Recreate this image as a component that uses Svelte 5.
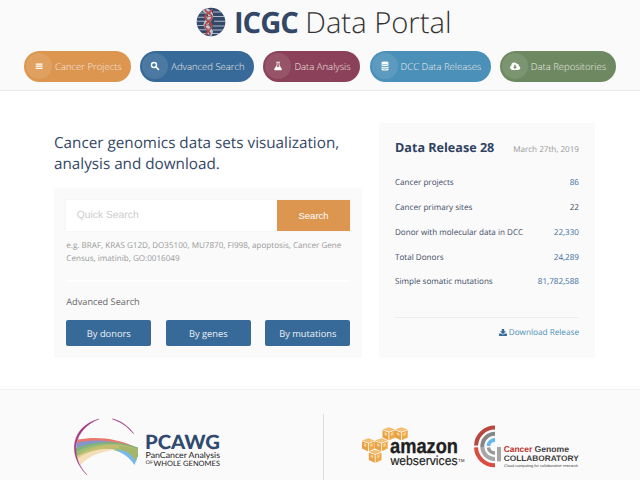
<script>
  const nav = [
    { label: 'Cancer Projects', icon: 'list', bg: '#dc964f', w: 107 },
    { label: 'Advanced Search', icon: 'search', bg: '#376a98', w: 114 },
    { label: 'Data Analysis', icon: 'flask', bg: '#8b4159', w: 97 },
    { label: 'DCC Data Releases', icon: 'db', bg: '#4a90b8', w: 121 },
    { label: 'Data Repositories', icon: 'cloud', bg: '#6e8961', w: 116 }
  ];
  const stats = [
    ['Cancer projects', '86', true],
    ['Cancer primary sites', '22', false],
    ['Donor with molecular data in DCC', '22,330', true],
    ['Total Donors', '24,289', true],
    ['Simple somatic mutations', '81,782,588', true]
  ];
  const cubes = [[20.5, 0], [33, 0], [0, 11], [13, 11], [6.8, 22.4]];
</script>

<header>
  <div class="brand">
    <svg width="30" height="30" viewBox="0 0 30 30">
      <defs><clipPath id="globe"><circle cx="15" cy="15" r="14.3" /></clipPath></defs>
      <g clip-path="url(#globe)">
        <rect width="30" height="30" fill="#344766" />
        <path d="M0 6h12M17 5h13M0 10.3h11M17 9.5h13M0 14.2h10M18 14.2h12M0 18.5h12M17 19h13M0 22.8h10M17 23h13M5 26.5h20" stroke="#a9b9ce" stroke-width="1.1" />
        <path d="M8 2c5 3 8 5 6 9s-6 5-3 9 5 4 2 8" stroke="#bfc8d7" stroke-width="5" fill="none" />
        <path d="M9 2c0 4 7 4 7 8s-7 5-7 9 6 5 5 9M16 2c0 4-7 4-7 8s7 5 7 9-6 5-6 9" stroke="#ad4a47" stroke-width="1.6" fill="none" />
        <path d="M10 5h5M10 9.5h5M10 13h5M10 18h5M10 22h5" stroke="#b85b58" stroke-width=".9" />
      </g>
    </svg>
    <h1><b>ICGC</b><span>Data Portal</span></h1>
  </div>
  <nav>
    {#each nav as n}
      <a style="background:{n.bg};width:{n.w}px">
        <i>
          <svg width="12" height="12" viewBox="0 0 12 12" fill="#fff">
            {#if n.icon === 'list'}
              <path d="M2.7 3.5h6.8v1.2H2.7zM2.7 5.6h6.8v1.2H2.7zM2.7 7.7h6.8v1.2H2.7z" />
            {:else if n.icon === 'search'}
              <circle cx="5" cy="5" r="2.5" fill="none" stroke="#fff" stroke-width="1.4" />
              <path d="M6.9 6.9l2.5 2.5" stroke="#fff" stroke-width="1.7" stroke-linecap="round" />
            {:else if n.icon === 'flask'}
              <path d="M4.2 1.7h3.7v.9h-.5v2.5l2.4 4c.4.7 0 1.2-.7 1.2H3c-.8 0-1-.6-.7-1.2l2.400-4V2.600h-.5z" />
              <path d="M5.500 2.600h1.100v2.700l.8 1.500H4.700l.8-1.500z" fill="#8b4159" />
            {:else if n.icon === 'db'}
              <ellipse cx="6" cy="3" rx="3.600" ry="1.400" />
              <path d="M2.400 4.100q3.600 1.700 7.200 0v1q-.3 1.200-3.600 1.200t-3.600-1.200zM2.400 6.400q3.600 1.700 7.200 0v1q-.3 1.200-3.600 1.200t-3.600-1.200zM2.400 8.600q3.600 1.700 7.200 0v.8q-.3 1.200-3.600 1.200t-3.600-1.200z" />
            {:else}
              <path d="M3.200 10a2.400 2.400 0 0 1-.9-4.500 3 3 0 0 1 5.500-1.700 1.800 1.800 0 0 1 2 2.100 2.100 2.100 0 0 1-.3 4.100z" />
              <path d="M5.300 4.800h1.300v2H8l-2.050 2.200L3.900 6.800h1.400z" fill="#6e8961" />
            {/if}
          </svg>
        </i>
        <span>{n.label}</span>
      </a>
    {/each}
  </nav>
</header>

<main>
  <section class="left">
    <h2>Cancer genomics data sets visualization,<br />analysis and download.</h2>
    <div class="panel">
      <div class="search">
        <div class="field">Quick Search</div>
        <button>Search</button>
      </div>
      <p>e.g. BRAF, KRAS G12D, DO35100, MU7870, FI998, apoptosis, Cancer Gene<br />Census, imatinib, GO:0016049</p>
      <div class="rule"></div>
      <h3>Advanced Search</h3>
      <div class="by">
        <a>By donors</a><a>By genes</a><a>By mutations</a>
      </div>
    </div>
  </section>
  <section class="release">
    <div class="head"><h4>Data Release 28</h4><time>March 27th, 2019</time></div>
    {#each stats as [k, v, link]}
      <div class="row"><span>{k}</span><span class:link>{v}</span></div>
    {/each}
    <div class="dl">
      <svg width="8" height="7" viewBox="0 0 9 8" fill="#376a98">
        <path d="M3.100 0h2.800v2.600h2L4.500 5.900 1.100 2.600h2zM0 5.200h2.400l2.100 1.300 2.100-1.300H9V8H0z" />
      </svg>
      <span>Download Release</span>
    </div>
  </section>
</main>

<footer>
  <svg class="pcawg" width="150" height="60" viewBox="72 415 150 60">
    <path d="M77.500 439.500C97 436 117 438 138 448L137.500 457C117 443 97 443 76.500 449z" fill="#e8796f" />
    <path d="M77 443C97 438 117 441 138 450L137 459C117 445 96 446 76 453z" fill="#8495c9" />
    <path d="M76 448C97 440 118 440 138 447.500V457C116 444 95 447 76 456z" fill="#82b27c" />
    <path d="M76 452C98 440 119 443 138 451L136 462C116 445 97 447 76 457z" fill="#9fbc77" opacity=".9" />
    <path d="M76.500 456C96 443 117 441 138 449V453C118 444 97 449 77 460z" fill="#cfbf6d" opacity=".75" />
    <path d="M77.500 458.500C91 450 101 448 116 449.500C99 452 89 456 80.500 465z" fill="#f4dfb8" />
    <path d="M116 450C124 450 131 453 137 458L134.500 465C129 457 124 454 116 450z" fill="#76b9ef" />
    <path d="M119 446C126 446 133 448 138 450L136 461C131 454 126 451 119 448z" fill="#a5b66c" />
    <path d="M99 419C72 426 66 454 87 475C68.500 455 73.500 429 99 419z" fill="#a03a83" stroke="#a03a83" stroke-width=".4" />
    <path d="M112.500 419C121 421 128 426 133.500 433.500C127 426 121 421.800 112.500 419z" fill="#a03a83" stroke="#a03a83" stroke-width=".6" />
    <g font-family="Lato, sans-serif">
      <text x="145" y="448.500" font-size="19.500" font-weight="900" fill="#304a70" textLength="75" lengthAdjust="spacingAndGlyphs">PCAWG</text>
      <text x="145.500" y="457.700" font-size="8.400" fill="#222" textLength="74.500" lengthAdjust="spacingAndGlyphs">PanCancer Analysis</text>
      <text x="145.500" y="464" font-size="5" fill="#333" textLength="7.500" lengthAdjust="spacingAndGlyphs">OF</text>
      <text x="153.500" y="465.800" font-size="7.400" fill="#222" textLength="66.500" lengthAdjust="spacingAndGlyphs">WHOLE GENOMES</text>
    </g>
  </svg>
  <div class="divider"></div>
  <svg class="aws" width="106" height="46" viewBox="360 425 106 46">
    {#each cubes as [x, y]}
      <g transform="translate({362 + x} {427.300 + y}) scale(1.06)">
        <path d="M6 0l6 2-6 2.200L0 2z" fill="#f3bd6c" />
        <path d="M0 2.800l5.600 2v7.400L0 9.600z" fill="#e7a043" />
        <path d="M12 2.800l-5.600 2v7.400L12 9.600z" fill="#eda84a" />
        <path d="M2 4.800l2 .8v2.300l-2-.8zM10 4.800l-2 .8v2.300l2-.8zM4 2h4" fill="#f8d391" stroke="#f8d391" stroke-width=".35" />
      </g>
    {/each}
    <g font-family="Liberation Sans, sans-serif" fill="#202020">
      <text x="390" y="453" font-size="20.500" font-weight="700" stroke="#202020" stroke-width=".3" textLength="68" lengthAdjust="spacingAndGlyphs">amazon</text>
      <text x="390.500" y="465" font-size="13" stroke="#202020" stroke-width=".15" textLength="67" lengthAdjust="spacingAndGlyphs">webservices</text>
      <text x="458" y="461.500" font-size="4.500" textLength="6.500" lengthAdjust="spacingAndGlyphs">TM</text>
    </g>
  </svg>
  <svg class="collab" width="110" height="44" viewBox="472 425 110 44">
    <g fill="none">
      <path d="M495 427.600A18.800 18.800 0 0 0 476 445.500" stroke="#b8473f" stroke-width="4" />
      <path d="M476 447.400A18.800 18.800 0 0 0 495 465.300" stroke="#d94d43" stroke-width="4" />
      <path d="M495 433.700A12.700 12.700 0 0 0 482.300 447" stroke="#858585" stroke-width="4" />
      <path d="M482.300 447A12.700 12.700 0 0 0 495 459.200" stroke="#a6a6a6" stroke-width="4" />
      <path d="M495 440A6.500 6.500 0 0 0 488.400 446" stroke="#66b8ed" stroke-width="3.800" />
      <path d="M488.400 447.500A6.500 6.500 0 0 0 495 453" stroke="#999" stroke-width="3.500" />
      <path d="M499 447v14.300" stroke="#a5a5a5" stroke-width="4" />
    </g>
    <g font-family="Liberation Sans, sans-serif">
      <text x="503.700" y="452.300" font-size="8.500" font-weight="700" fill="#bd332e" textLength="28.500" lengthAdjust="spacingAndGlyphs">Cancer</text>
      <text x="534.500" y="452.300" font-size="8.500" font-weight="700" fill="#444" textLength="34.500" lengthAdjust="spacingAndGlyphs">Genome</text>
      <text x="503.700" y="460.500" font-size="8" font-weight="700" fill="#3c3c3c" textLength="75" lengthAdjust="spacingAndGlyphs">COLLABORATORY</text>
      <text x="504" y="467" font-size="3.900" fill="#444" textLength="74" lengthAdjust="spacingAndGlyphs">Cloud computing for collaborative research</text>
    </g>
  </svg>
</footer>

<style>
  :global(body) { margin: 0; background: #fff; overflow: hidden; }
  :global(#app) { height: 480px; overflow: hidden; font-family: "Open Sans", "Noto Sans", sans-serif; text-rendering: geometricPrecision; }
  h1, h2, h3, h4, p { margin: 0; font-weight: 400; }
  header { box-sizing: border-box; height: 91px; background: #fafafa; border-bottom: 1px solid #e9e9e9; }
  .brand { display: flex; height: 51px; padding-left: 196px; gap: 8px; }
  .brand svg { margin-top: 7px; }
  h1 { display: flex; gap: 7.500px; font-size: 29.200px; line-height: 44px; white-space: nowrap; color: #333; font-weight: 300; }
  h1 b { color: #344766; font-weight: 700; letter-spacing: -1.050px; }
  nav { display: flex; gap: 9.200px; padding-left: 24px; }
  nav a { display: flex; flex: none; box-sizing: border-box; height: 30.500px; border-radius: 16px; padding: 2px; align-items: center; gap: 3px; color: #f3ece8; font-size: 9.500px; font-weight: 300; white-space: nowrap; }
  nav i { display: flex; flex: none; width: 26px; height: 26px; border-radius: 50%; background: rgba(255,255,255,.1); align-items: center; justify-content: center; }
  main { display: flex; gap: 17px; height: 298px; padding-left: 54px; }
  .left { width: 308px; }
  h2 { padding-top: 42px; height: 55px; font-size: 15.250px; line-height: 20.600px; color: #344766; white-space: nowrap; }
  .panel { box-sizing: border-box; height: 170px; padding: 12px 12px 0 12.300px; background: #fafafa; }
  .search { display: flex; height: 31px; width: 284px; box-shadow: 0 0 2px #eee; font-family: "Liberation Sans", sans-serif; }
  .field { flex: 1; background: #fff; color: #ccc; font-size: 10.300px; line-height: 32px; padding-left: 10.500px; }
  button { width: 73.500px; border: 0; padding: 0; background: #dc964f; color: #fff; font: 9.500px "Liberation Sans", sans-serif; }
  p { margin-top: 9px; font-size: 8.100px; line-height: 12.600px; color: #999; white-space: nowrap; }
  .rule { height: 1px; background: #fff; margin-top: 15px; border-bottom: 1px solid #fdfdfd; }
  h3 { font-size: 9.200px; line-height: 14px; margin-top: 12.500px; color: #666; }
  .by { display: flex; justify-content: space-between; width: 284px; margin-top: 11px; }
  .by a { width: 85px; height: 26.500px; border-radius: 2px; background: #376a98; color: #edf2f6; text-align: center; font-size: 9.300px; line-height: 27px; }
  .release { box-sizing: border-box; width: 216px; height: 235px; margin-top: 32px; padding: 14px 16px 0; background: #fafafa; }
  .head { display: flex; justify-content: space-between; align-items: baseline; height: 34px; line-height: 22px; white-space: nowrap; }
  h4 { font-size: 12.600px; font-weight: 700; color: #2f4262; }
  time { font-size: 8.100px; color: #999; }
  .row { display: flex; justify-content: space-between; height: 24.850px; line-height: 24.850px; font-size: 8.100px; color: #3c4b65; white-space: nowrap; }
  .row .link { color: #3b6ea2; }
  .dl { display: flex; justify-content: flex-end; align-items: center; gap: 1.500px; margin-top: 21.500px; height: 29.500px; border-top: 1px solid #ececec; font-size: 8.200px; color: #4a90b8; white-space: nowrap; }
  footer { display: flex; box-sizing: border-box; height: 91px; background: #fafafa; border-top: 1px solid #f1f1f1; padding-left: 72px; }
  footer svg { overflow: visible; }
  .pcawg { margin-top: 25px; flex: none; }
  .divider { margin: 24px 36px 0 101px; width: 1px; flex: none; background: #ddd; }
  .aws { margin-top: 35px; flex: none; }
  .collab { margin: 35px 0 0 6px; flex: none; }
</style>
